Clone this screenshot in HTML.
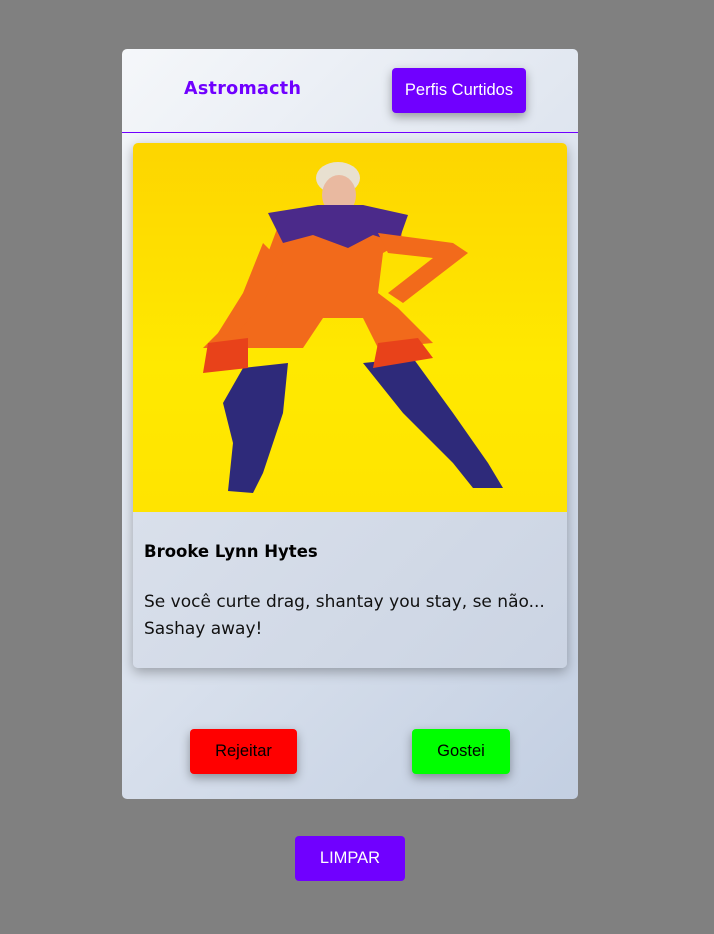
<!DOCTYPE html>
<html><head><meta charset="utf-8"><style>
*{margin:0;padding:0;box-sizing:border-box}
body{width:714px;height:934px;background:#808080;position:relative;font-family:"Liberation Sans",sans-serif;overflow:hidden}
.card{position:absolute;left:122px;top:49px;width:456px;height:750px;border-radius:5px;background:linear-gradient(135deg,#f5f7fa,#c3cfe2)}
.hdr{position:absolute;left:0;top:0;width:456px;height:84px;border-bottom:1px solid #7000ff}
.title{position:absolute;left:62px;top:30px;font-family:"DejaVu Sans",sans-serif;font-weight:bold;font-size:17.5px;color:#7000ff;letter-spacing:0.3px}
.btn{position:absolute;border-radius:4px;box-shadow:0 4px 10px rgba(0,0,0,.35);font-size:16.5px;display:flex;align-items:center;justify-content:center}
.prof{position:absolute;left:11px;top:94px;width:434px;height:525px;border-radius:5px;box-shadow:0 4px 12px rgba(0,0,0,.3);overflow:hidden;background:linear-gradient(135deg,#e2e7f0,#cbd4e3)}
.img{position:absolute;left:0;top:0;width:434px;height:369px;background:linear-gradient(#fdd500,#ffe900 60%,#ffe400)}
.name{position:absolute;left:11px;top:399px;font-family:"DejaVu Sans",sans-serif;font-weight:bold;font-size:16.5px;color:#000}
.desc{position:absolute;left:11px;top:446px;width:424px;font-family:"DejaVu Sans",sans-serif;font-size:17px;line-height:27px;color:#111}
</style></head><body>
<div class="card">
 <div class="hdr">
  <div class="title">Astromacth</div>
  <div class="btn" style="left:270px;top:19px;width:134px;height:45px;background:#7000ff;color:#fff">Perfis Curtidos</div>
 </div>
 <div class="prof">
  <div class="img">
   <svg width="434" height="369" viewBox="0 0 434 369">
    <ellipse cx="205" cy="35" rx="22" ry="16" fill="#e8e0d0"/>
    <ellipse cx="206" cy="52" rx="17" ry="20" fill="#e9b9a0"/>
    <path d="M150 70 L185 62 L230 62 L270 75 L268 100 L250 110 L245 150 L265 165 L300 200 L245 205 L230 175 L190 175 L170 205 L70 205 L95 180 L120 150 L135 110 Z" fill="#f26a1b"/>
    <path d="M135 70 L185 62 L230 62 L275 72 L265 100 L240 92 L215 105 L180 92 L150 100 Z" fill="#4b2a8a"/>
    <path d="M245 90 L320 100 L335 110 L270 160 L255 150 L300 115 L255 110 Z" fill="#f26a1b"/>
    <path d="M130 100 L110 150 L85 190 L100 195 L130 160 L150 120 Z" fill="#f26a1b"/>
    <path d="M110 225 L155 220 L150 270 L130 330 L120 350 L95 348 L100 300 L90 260 Z" fill="#2e2a7a"/>
    <path d="M230 220 L280 215 L320 270 L355 320 L370 345 L340 345 L320 320 L270 270 Z" fill="#2e2a7a"/>
    <path d="M75 200 L115 195 L115 225 L70 230 Z" fill="#e8421a"/>
    <path d="M245 200 L285 195 L300 215 L240 225 Z" fill="#e8421a"/>
   </svg>
  </div>
  <div class="name">Brooke Lynn Hytes</div>
  <div class="desc">Se você curte drag, shantay you stay, se não... Sashay away!</div>
 </div>
 <div class="btn" style="left:68px;top:680px;width:107px;height:45px;background:#ff0000;color:#000">Rejeitar</div>
 <div class="btn" style="left:290px;top:680px;width:98px;height:45px;background:#00ff00;color:#000">Gostei</div>
</div>
<div class="btn" style="left:295px;top:836px;width:110px;height:45px;background:#7000ff;color:#fff;box-shadow:none">LIMPAR</div>
</body></html>
